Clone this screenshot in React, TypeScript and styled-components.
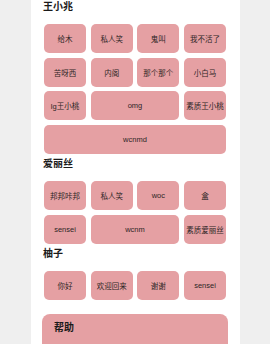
import React from "react";
import styled, { createGlobalStyle } from "styled-components";

const Global = createGlobalStyle`
  html, body { margin: 0; padding: 0; background: #efefef; }
  body { font-family: "Liberation Sans", "Noto Sans CJK SC", sans-serif; }
`;

const Page = styled.div`
  width: 209px;
  margin-left: 31px;
  background: #ffffff;
  padding: 0 12px 0 13px;
  box-sizing: border-box;
  overflow: hidden;
  height: 344px;
`;

const Section = styled.section<{ $first?: boolean }>`
  margin-top: ${(p) => (p.$first ? "0" : "3px")};
`;

const Heading = styled.h2`
  margin: 0 0 10px -1px;
  height: 14px;
  line-height: 14px;
  font-size: 10px;
  font-weight: 700;
  color: #1a1a1a;
`;

const Grid = styled.div`
  display: grid;
  grid-template-columns: repeat(4, 1fr);
  grid-auto-rows: 29px;
  gap: 4.67px;
  width: 182px;
`;

const Chip = styled.div<{ $span?: number }>`
  grid-column: span ${(p) => p.$span ?? 1};
  background: #e5a0a3;
  border-radius: 5px;
  display: flex;
  align-items: center;
  justify-content: center;
  font-size: 7.5px;
  color: #2e2626;
  white-space: nowrap;
`;

const HelpCard = styled.div`
  margin-top: 14px;
  margin-left: -2px;
  width: 186px;
  height: 60px;
  background: #e5a0a3;
  border-radius: 8px;
  padding: 7px 12px;
  box-sizing: border-box;
`;

const HelpTitle = styled.div`
  font-size: 10px;
  font-weight: 700;
  line-height: 14px;
  color: #1a1a1a;
`;

type Item = { t: string; s?: number };

const groups: { title: string; items: Item[] }[] = [
  {
    title: "王小兆",
    items: [
      { t: "给木" }, { t: "私人笑" }, { t: "鬼叫" }, { t: "我不活了" },
      { t: "苦呀西" }, { t: "内阁" }, { t: "那个那个" }, { t: "小白马" },
      { t: "lg王小桃" }, { t: "omg", s: 2 }, { t: "素质王小桃" },
      { t: "wcnmd", s: 4 },
    ],
  },
  {
    title: "爱丽丝",
    items: [
      { t: "邦邦咔邦" }, { t: "私人笑" }, { t: "woc" }, { t: "盒" },
      { t: "sensei" }, { t: "wcnm", s: 2 }, { t: "素质爱丽丝" },
    ],
  },
  {
    title: "柚子",
    items: [{ t: "你好" }, { t: "欢迎回来" }, { t: "谢谢" }, { t: "sensei" }],
  },
];

export default function App() {
  return (
    <>
      <Global />
      <Page>
        {groups.map((g, i) => (
          <Section key={g.title} $first={i === 0}>
            <Heading>{g.title}</Heading>
            <Grid>
              {g.items.map((it, j) => (
                <Chip key={j} $span={it.s}>{it.t}</Chip>
              ))}
            </Grid>
          </Section>
        ))}
        <HelpCard>
          <HelpTitle>帮助</HelpTitle>
        </HelpCard>
      </Page>
    </>
  );
}
